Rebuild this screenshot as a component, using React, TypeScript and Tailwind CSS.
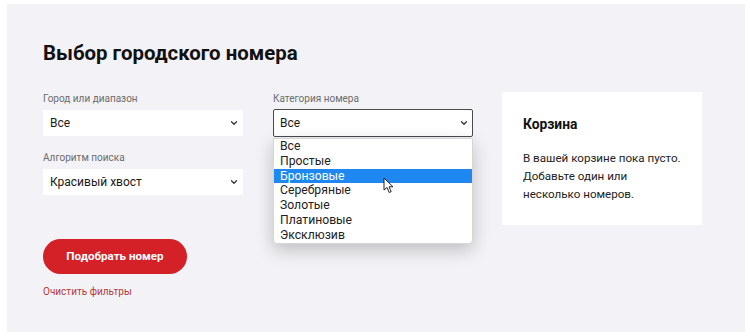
import React from 'react';
import { ChevronDown } from 'lucide-react';

const categories = ['Все', 'Простые', 'Бронзовые', 'Серебряные', 'Золотые', 'Платиновые', 'Эксклюзив'];

const Field: React.FC<{ label: string; value: string }> = ({ label, value }) => (
  <div className="w-[200px]">
    <div className="text-[10px] leading-[14px] text-[#6b6b6b] mb-[4px]">{label}</div>
    <div className="h-[26px] bg-white flex items-center justify-between pl-[7px] pr-[4px] text-[12px] text-[#1a1a1a]">
      <span>{value}</span>
      <ChevronDown size={10} strokeWidth={3} className="text-[#333]" />
    </div>
  </div>
);

const Cursor: React.FC = () => (
  <svg width="12" height="17" viewBox="0 0 12 17" className="absolute left-[109px] top-[38px]">
    <path d="M1 1 L1 13 L4 10.5 L6.2 15.5 L8.2 14.6 L6 9.8 L10 9.8 Z" fill="#fff" stroke="#222" strokeWidth="1" strokeLinejoin="round" />
  </svg>
);

const App: React.FC = () => {
  return (
    <div className="w-[750px] h-[336px] bg-white pt-[4px] pl-[7px] font-['Roboto',sans-serif]">
      <div className="w-[738px] h-[328px] bg-[#f3f3f7] pl-[36px] pt-[37px]">
        <h1 className="text-[20.4px] leading-[25px] font-bold text-[#111]">Выбор городского номера</h1>

        <div className="flex gap-[29px] mt-[26px]">
          <div className="w-[430px]">
            <div className="flex gap-[30px]">
              <div className="flex flex-col gap-[15px]">
                <Field label="Город или диапазон" value="Все" />
                <Field label="Алгоритм поиска" value="Красивый хвост" />
              </div>

              <div className="w-[200px] relative">
                <div className="text-[10px] leading-[14px] text-[#6b6b6b] mb-[3px]">Категория номера</div>
                <div className="h-[28px] bg-white border border-[#4a4a4a] rounded-[2px] flex items-center justify-between pl-[6px] pr-[3px] text-[12px] text-[#1a1a1a]">
                  <span>Все</span>
                  <ChevronDown size={10} strokeWidth={3} className="text-[#333]" />
                </div>
                <div className="absolute left-0 top-[46px] w-[200px] bg-white border border-[#d6d6d6] rounded-b-[4px] shadow-[0_6px_18px_rgba(0,0,0,0.22)]">
                  {categories.map((c, i) => (
                    <div
                      key={c}
                      className={`h-[14.8px] leading-[14.8px] pl-[6px] text-[12.2px] ${i === 2 ? 'bg-[#1e88f0] text-white' : 'text-[#222]'}`}
                    >
                      {c}
                    </div>
                  ))}
                  <Cursor />
                </div>
              </div>
            </div>

            <button className="mt-[44px] w-[144px] h-[35px] rounded-full bg-[#d42027] text-white text-[11.6px] font-bold">
              Подобрать номер
            </button>
            <div className="mt-[11px] text-[10px] leading-[14px] text-[#b4373c]">Очистить фильтры</div>
          </div>

          <div className="w-[200px] h-[133px] bg-white pl-[21px] pt-[23px]">
            <div className="text-[13.8px] leading-[18px] font-bold text-[#111]">Корзина</div>
            <p className="mt-[16px] text-[11.6px] leading-[18px] text-[#222]">
              В вашей корзине пока пусто.
              <br />
              Добавьте один или
              <br />
              несколько номеров.
            </p>
          </div>
        </div>
      </div>
    </div>
  );
};

export default App;
